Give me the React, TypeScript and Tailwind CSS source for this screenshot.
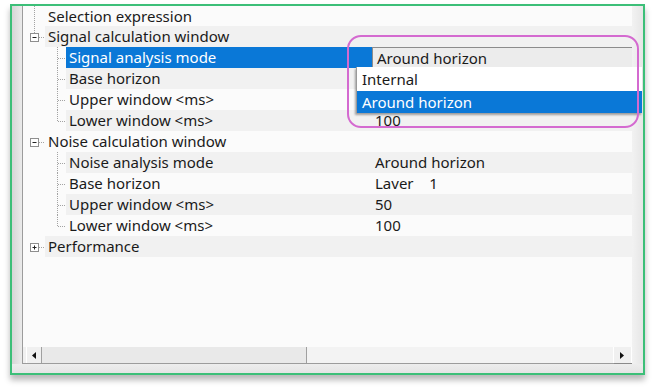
import React from 'react';

type Row = {
  level: 0 | 1;
  label: string;
  value?: string;
  expander?: 'minus' | 'plus';
  last?: boolean;
  first?: boolean;
  selected?: boolean;
  h: number;
};

const rows: Row[] = [
  { level: 0, label: 'Selection expression', first: true, h: 20 },
  { level: 0, label: 'Signal calculation window', expander: 'minus', h: 21 },
  { level: 1, label: 'Signal analysis mode', selected: true, h: 21 },
  { level: 1, label: 'Base horizon', h: 21 },
  { level: 1, label: 'Upper window <ms>', h: 21 },
  { level: 1, label: 'Lower window <ms>', value: '100', last: true, h: 21 },
  { level: 0, label: 'Noise calculation window', expander: 'minus', h: 21 },
  { level: 1, label: 'Noise analysis mode', value: 'Around horizon', h: 21 },
  { level: 1, label: 'Base horizon', value: 'Laver\u00a0\u00a0\u00a0\u00a01', h: 21 },
  { level: 1, label: 'Upper window <ms>', value: '50', h: 21 },
  { level: 1, label: 'Lower window <ms>', value: '100', last: true, h: 21 },
  { level: 0, label: 'Performance', expander: 'plus', h: 21 },
];

const dot = { stroke: '#a3a3a3', strokeWidth: 1, strokeDasharray: '1 1' } as const;

function Gutter({ row }: { row: Row }) {
  const w = row.level === 0 ? 22 : 43;
  const h = row.h;
  const mid = Math.round(h / 2) + 0.5;
  return (
    <svg width={w} height={h} className="shrink-0 block">
      {row.level === 0 && row.first && <line x1={11.5} y1={0} x2={11.5} y2={h} {...dot} />}
      {row.level === 0 && row.expander && (
        <g>
          {row.expander === 'minus' && row.label.startsWith('Signal') && (
            <line x1={11.5} y1={0} x2={11.5} y2={mid - 4} {...dot} />
          )}
          <line x1={16} y1={mid} x2={22} y2={mid} {...dot} />
          <rect x={7.5} y={mid - 4} width={8} height={8} fill="#ffffff" stroke="#8f8f8f" strokeWidth={1} />
          <line x1={9.5} y1={mid} x2={13.5} y2={mid} stroke="#222" strokeWidth={1} />
          {row.expander === 'plus' && <line x1={11.5} y1={mid - 2} x2={11.5} y2={mid + 2} stroke="#222" strokeWidth={1} />}
        </g>
      )}
      {row.level === 1 && (
        <g>
          <line x1={34.5} y1={0} x2={34.5} y2={row.last ? mid : h} {...dot} />
          <line x1={35} y1={mid} x2={43} y2={mid} {...dot} />
        </g>
      )}
    </svg>
  );
}

function TreeRow({ row, index }: { row: Row; index: number }) {
  const band = index % 2 === 1 ? 'bg-[#f1f1f1]' : 'bg-[#fbfbfb]';
  const labelW = row.level === 0 ? 'w-[327px]' : 'w-[306px]';
  return (
    <div className="flex items-stretch" style={{ height: row.h }}>
      <Gutter row={row} />
      <div className={`flex flex-1 ${row.selected ? 'bg-[#0a78d7]' : band}`}>
        <div
          className={`${labelW} shrink-0 pl-[3px] flex items-center whitespace-nowrap ${
            row.selected ? 'text-white' : 'text-[#1a1a1a]'
          }`}
        >
          {row.label}
        </div>
        <div className="flex-1 flex items-center">
          {row.selected ? (
            <div className="flex-1 h-full bg-[#ececec] border-t border-l border-[#8c8c8c] pl-[4px] flex items-center text-[#1a1a1a]">
              Around horizon
            </div>
          ) : (
            <span className="pl-[3px] text-[#1a1a1a] whitespace-nowrap">{row.value ?? ''}</span>
          )}
        </div>
      </div>
    </div>
  );
}

export default function App() {
  return (
    <div
      className="relative w-[656px] h-[389px] bg-white overflow-hidden text-[15px] leading-none"
      style={{ fontFamily: '"Noto Sans", "Open Sans", sans-serif' }}
    >
      <div className="ml-[10px] mt-[4px] w-[635px] h-[371px] border-2 border-[#3cbf78] shadow-[0_5px_6px_rgba(0,0,0,0.28)] flex flex-col bg-[#ececec]">
        <div className="flex flex-1 min-h-0">
          {/* left bevel */}
          <div className="w-[10px] shrink-0 bg-gradient-to-r from-[#d6d6d6] to-[#ebebeb]" />
          {/* main */}
          <div className="w-[610px] shrink-0 flex flex-col border-l border-[#9c9c9c] bg-[#fbfbfb]">
            <div className="flex-1 flex flex-col">
              {rows.map((r, i) => (
                <TreeRow key={i} row={r} index={i} />
              ))}
            </div>
            {/* horizontal scrollbar */}
            <div className="h-[17px] flex items-stretch bg-[#f0f0f0] border-b border-[#9c9c9c] pl-[3px]">
              <div className="w-[16px] bg-[#f0f0f0] border-r border-[#a0a0a0] border-l border-l-[#ffffff] flex items-center justify-center">
                <svg width="5" height="7"><polygon points="4,0 4,7 0,3.5" fill="#111" /></svg>
              </div>
              <div className="w-[265px] bg-[#e9e9e9] border-r border-[#a0a0a0]" />
              <div className="flex-1 bg-[#f3f3f3]" />
              <div className="w-[19px] bg-[#f0f0f0] border-l border-[#ffffff] border-r border-[#a0a0a0] flex items-center justify-center shadow-[1px_1px_0_#8a8a8a]">
                <svg width="5" height="7"><polygon points="0,0 0,7 4,3.5" fill="#111" /></svg>
              </div>
            </div>
          </div>
          {/* right bevel */}
          <div className="flex-1 bg-gradient-to-r from-[#f2f2f2] to-[#e6e6e6]" />
        </div>
        {/* bottom bevel */}
        <div className="h-[9px] shrink-0 bg-gradient-to-b from-[#ededed] to-[#e4e4e4]" />
      </div>

      {/* dropdown list */}
      <div className="absolute left-[356px] top-[67px] w-[286px] bg-white border-l border-[#9a9a9a] shadow-[-1px_2px_2px_rgba(0,0,0,0.35)]">
        <div className="h-[24px] pl-[5px] flex items-center text-[#1a1a1a]">Internal</div>
        <div className="h-[22px] pl-[5px] flex items-center bg-[#0a78d7] text-white">Around horizon</div>
      </div>

      {/* annotation */}
      <div className="absolute left-[347px] top-[35px] w-[292px] h-[93px] rounded-[14px] border-[2.5px] border-[#d46ad0]" />
    </div>
  );
}
